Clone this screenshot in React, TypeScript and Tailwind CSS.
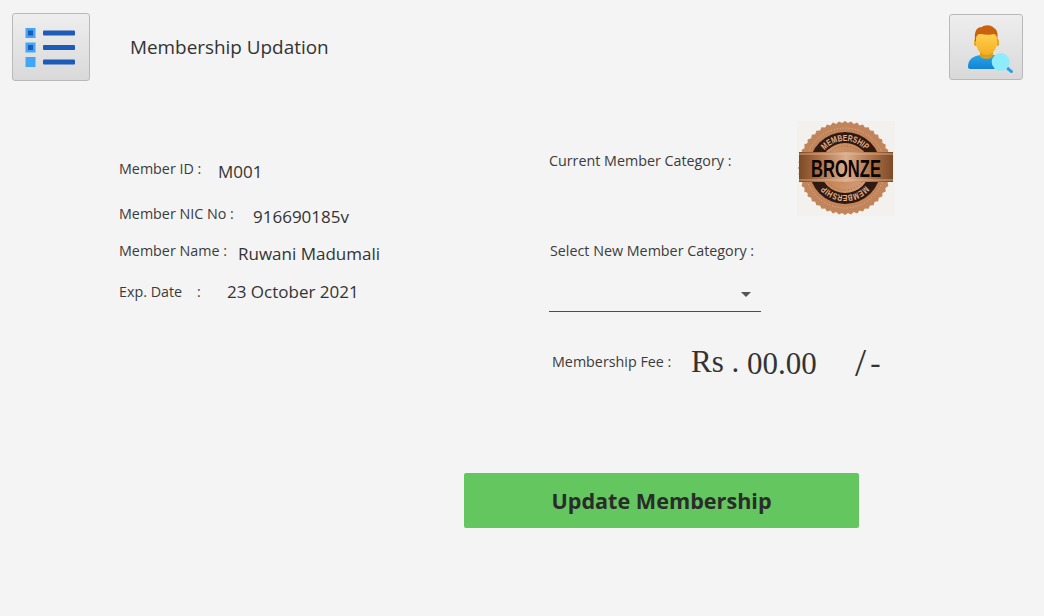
import { FC, ReactNode } from 'react';

const ListIcon: FC = () => (
  <svg width="52" height="42" viewBox="0 0 52 42">
    <rect x="0.5" y="2" width="10" height="10" fill="#42a5f5" />
    <rect x="3" y="4.5" width="5" height="5" fill="#1c5bb8" />
    <rect x="0.5" y="16.5" width="10" height="10" fill="#42a5f5" />
    <rect x="3" y="19" width="5" height="5" fill="#1c5bb8" />
    <rect x="0.5" y="31" width="10" height="10" fill="#42a5f5" />
    <rect x="18" y="4.5" width="32" height="5" rx="1" fill="#1c5bb8" />
    <rect x="18" y="19" width="32" height="5" rx="1" fill="#1c5bb8" />
    <rect x="18" y="33.5" width="32" height="5" rx="1" fill="#1c5bb8" />
  </svg>
);

const UserSearchIcon: FC = () => (
  <svg width="46" height="48" viewBox="0 0 46 48">
    <defs>
      <linearGradient id="face" x1="0" y1="0" x2="0" y2="1">
        <stop offset="0" stopColor="#ffcf50" />
        <stop offset="1" stopColor="#f5ae22" />
      </linearGradient>
      <linearGradient id="body" x1="0" y1="0" x2="0" y2="1">
        <stop offset="0" stopColor="#2aa5e8" />
        <stop offset="1" stopColor="#1283d6" />
      </linearGradient>
    </defs>
    <path d="M1 42 C1 35 5 31 14 30 L27 30 C31 31 34 33 36 37 L36 44 L3 44 C2 44 1 43 1 42 Z" fill="url(#body)" />
    <path d="M13 26 L26 26 L26 31 C24 35 15 35 13 31 Z" fill="#d9a020" />
    <rect x="7" y="14" width="3" height="7" rx="1.5" fill="#e9a52a" />
    <rect x="29" y="14" width="3" height="7" rx="1.5" fill="#e9a52a" />
    <path d="M8 15 C7 6 10 2 15 2 C17 0 24 -1 27 3 C31 5 31 10 30 16 L8 16 Z" fill="#c8620f" />
    <path d="M9 13 C10 9 12 9 14 9 C18 10 24 10 27 9 C29 10 30 11 30 14 L30 19 C29 26 24 30 19.5 30 C15 30 10 26 9 19 Z" fill="url(#face)" />
    <path d="M39 42 L45.5 47.5" stroke="#2a9fe6" strokeWidth="3" />
    <circle cx="33.7" cy="37" r="9" fill="#8fecff" />
  </svg>
);

const sealPoints = (() => {
  const pts: string[] = [];
  for (let i = 0; i < 96; i++) {
    const a = (i / 96) * Math.PI * 2;
    const r = i % 2 === 0 ? 47 : 45;
    pts.push(`${(48 + r * Math.cos(a)).toFixed(1)},${(47 + r * Math.sin(a)).toFixed(1)}`);
  }
  return pts.join(' ');
})();

const BronzeBadge: FC = () => (
  <svg width="98" height="95" viewBox="0 0 98 95" className="bg-[#f3f1ee]">
    <defs>
      <linearGradient id="ribbon" x1="0" y1="0" x2="1" y2="0">
        <stop offset="0" stopColor="#7d4a27" />
        <stop offset="0.2" stopColor="#a96d42" />
        <stop offset="0.5" stopColor="#dcae8e" />
        <stop offset="0.8" stopColor="#a96d42" />
        <stop offset="1" stopColor="#7d4a27" />
      </linearGradient>
      <linearGradient id="medal" x1="0" y1="0" x2="1" y2="1">
        <stop offset="0" stopColor="#d39a72" />
        <stop offset="0.5" stopColor="#c58558" />
        <stop offset="1" stopColor="#d9a583" />
      </linearGradient>
      <path id="arcTop" d="M21 47 A27 27 0 0 1 75 47" />
    </defs>
    <polygon points={sealPoints} fill="#c2845a" />
    <circle cx="48" cy="47" r="40" fill="none" stroke="#e3b99b" strokeWidth="1" strokeDasharray="1 2" />
    <circle cx="48" cy="47" r="36" fill="#2e1a10" />
    <circle cx="48" cy="47" r="25" fill="url(#medal)" />
    <circle cx="48" cy="47" r="22" fill="none" stroke="#8f5a35" strokeWidth="0.8" strokeDasharray="1 2" />
    <text fontSize="9" fontWeight="700" fontFamily="'Liberation Sans', sans-serif" fill="#e2b08c">
      <textPath href="#arcTop" startOffset="50%" textAnchor="middle" textLength="46" lengthAdjust="spacingAndGlyphs">MEMBERSHIP</textPath>
    </text>
    <text fontSize="9" fontWeight="700" fontFamily="'Liberation Sans', sans-serif" fill="#e2b08c" transform="rotate(180 48 47)">
      <textPath href="#arcTop" startOffset="50%" textAnchor="middle" textLength="46" lengthAdjust="spacingAndGlyphs">MEMBERSHIP</textPath>
    </text>
    <rect x="2" y="31" width="94" height="30" fill="url(#ribbon)" />
    <path d="M2 33 H96 M2 59 H96" stroke="#e7bd9d" strokeWidth="0.8" />
    <text x="49" y="55.5" textAnchor="middle" fontSize="23" fontWeight="700" fontFamily="'Liberation Sans', sans-serif" fill="#0a0503" textLength="70" lengthAdjust="spacingAndGlyphs">BRONZE</text>
  </svg>
);

const ToolButton: FC<{ className: string; children: ReactNode }> = ({ className, children }) => (
  <button className={`flex items-center justify-center rounded-[3px] border border-[#b9b9b9] bg-gradient-to-b from-[#eeeeee] to-[#d9d9d9] ${className}`}>
    {children}
  </button>
);

const InfoRow: FC<{ label: string; value: string; labelWidth: string; className: string; valueClass: string }> = ({ label, value, labelWidth, className, valueClass }) => (
  <div className={`flex items-start ${className}`}>
    <span className={`text-[14.3px] leading-[20px] text-[#3b3b3b] whitespace-pre ${labelWidth}`}>{label}</span>
    <span className={`text-[17px] leading-[24px] text-[#333333] ${valueClass}`}>{value}</span>
  </div>
);

export default function App() {
  return (
    <div className="h-[616px] w-[1044px] overflow-hidden bg-[#f4f4f4] font-['Open_Sans','Noto_Sans',sans-serif]">
      <header className="flex items-start pl-[12px] pr-[21px] pt-[13px]">
        <ToolButton className="h-[68px] w-[78px]"><ListIcon /></ToolButton>
        <h1 className="ml-[40px] mt-[21px] text-[18.9px] leading-[26px] font-normal text-[#333333]">Membership Updation</h1>
        <ToolButton className="ml-auto mt-px h-[66px] w-[74px] pl-[8px] pt-[4px]"><UserSearchIcon /></ToolButton>
      </header>

      <main className="flex pt-[40px]">
        <section className="ml-[119px] w-[430px] pt-[38px]">
          <InfoRow label="Member ID :" value="M001" labelWidth="w-[99px]" className="h-[45px]" valueClass="mt-[1px]" />
          <InfoRow label="Member NIC No :" value="916690185v" labelWidth="w-[134px]" className="h-[37px]" valueClass="mt-[1px]" />
          <InfoRow label="Member Name :" value="Ruwani Madumali" labelWidth="w-[119px]" className="h-[41px]" valueClass="mt-[1px]" />
          <InfoRow label={'Exp. Date    :'} value="23 October 2021" labelWidth="w-[108px]" className="h-[30px]" valueClass="-mt-[2px]" />
        </section>

        <section className="w-[346px]">
          <div className="flex items-start">
            <span className="mt-[30px] w-[248px] text-[14.3px] leading-[20px] text-[#3b3b3b]">Current Member Category :</span>
            <BronzeBadge />
          </div>
          <p className="ml-px mt-[25px] text-[14.3px] leading-[20px] text-[#3b3b3b]">Select New Member Category :</p>
          <div className="mt-[20px] flex h-[31px] w-[212px] items-center justify-end border-b border-[#4d4d4d] pr-[10px]">
            <span className="-mt-[4px] h-0 w-0 border-x-[5px] border-t-[5px] border-x-transparent border-t-[#555555]" />
          </div>
          <div className="ml-[3px] mt-[32px] flex h-[36px] items-center">
            <span className="w-[139px] text-[14.3px] leading-[20px] text-[#3b3b3b]">Membership Fee :</span>
            <div className="mt-[2px] flex w-[164px] items-start whitespace-pre font-['Liberation_Serif',serif] text-[31px] leading-[36px] text-[#333333]">
              <span>{'Rs . '}</span>
              <span className="mt-[2px]">00.00</span>
            </div>
            <div className="mt-[2px] flex items-center font-['Liberation_Serif',serif] leading-[36px] text-[#333333]">
              <span className="text-[40px]">/</span>
              <span className="ml-[4px] text-[31px]">-</span>
            </div>
          </div>
        </section>
      </main>

      <div className="ml-[464px] mt-[93px]">
        <button className="h-[55px] w-[395px] rounded-[2px] bg-[#63c65e] pt-px text-[21.6px] font-bold text-[#2b2b2b]">Update Membership</button>
      </div>
    </div>
  );
}
